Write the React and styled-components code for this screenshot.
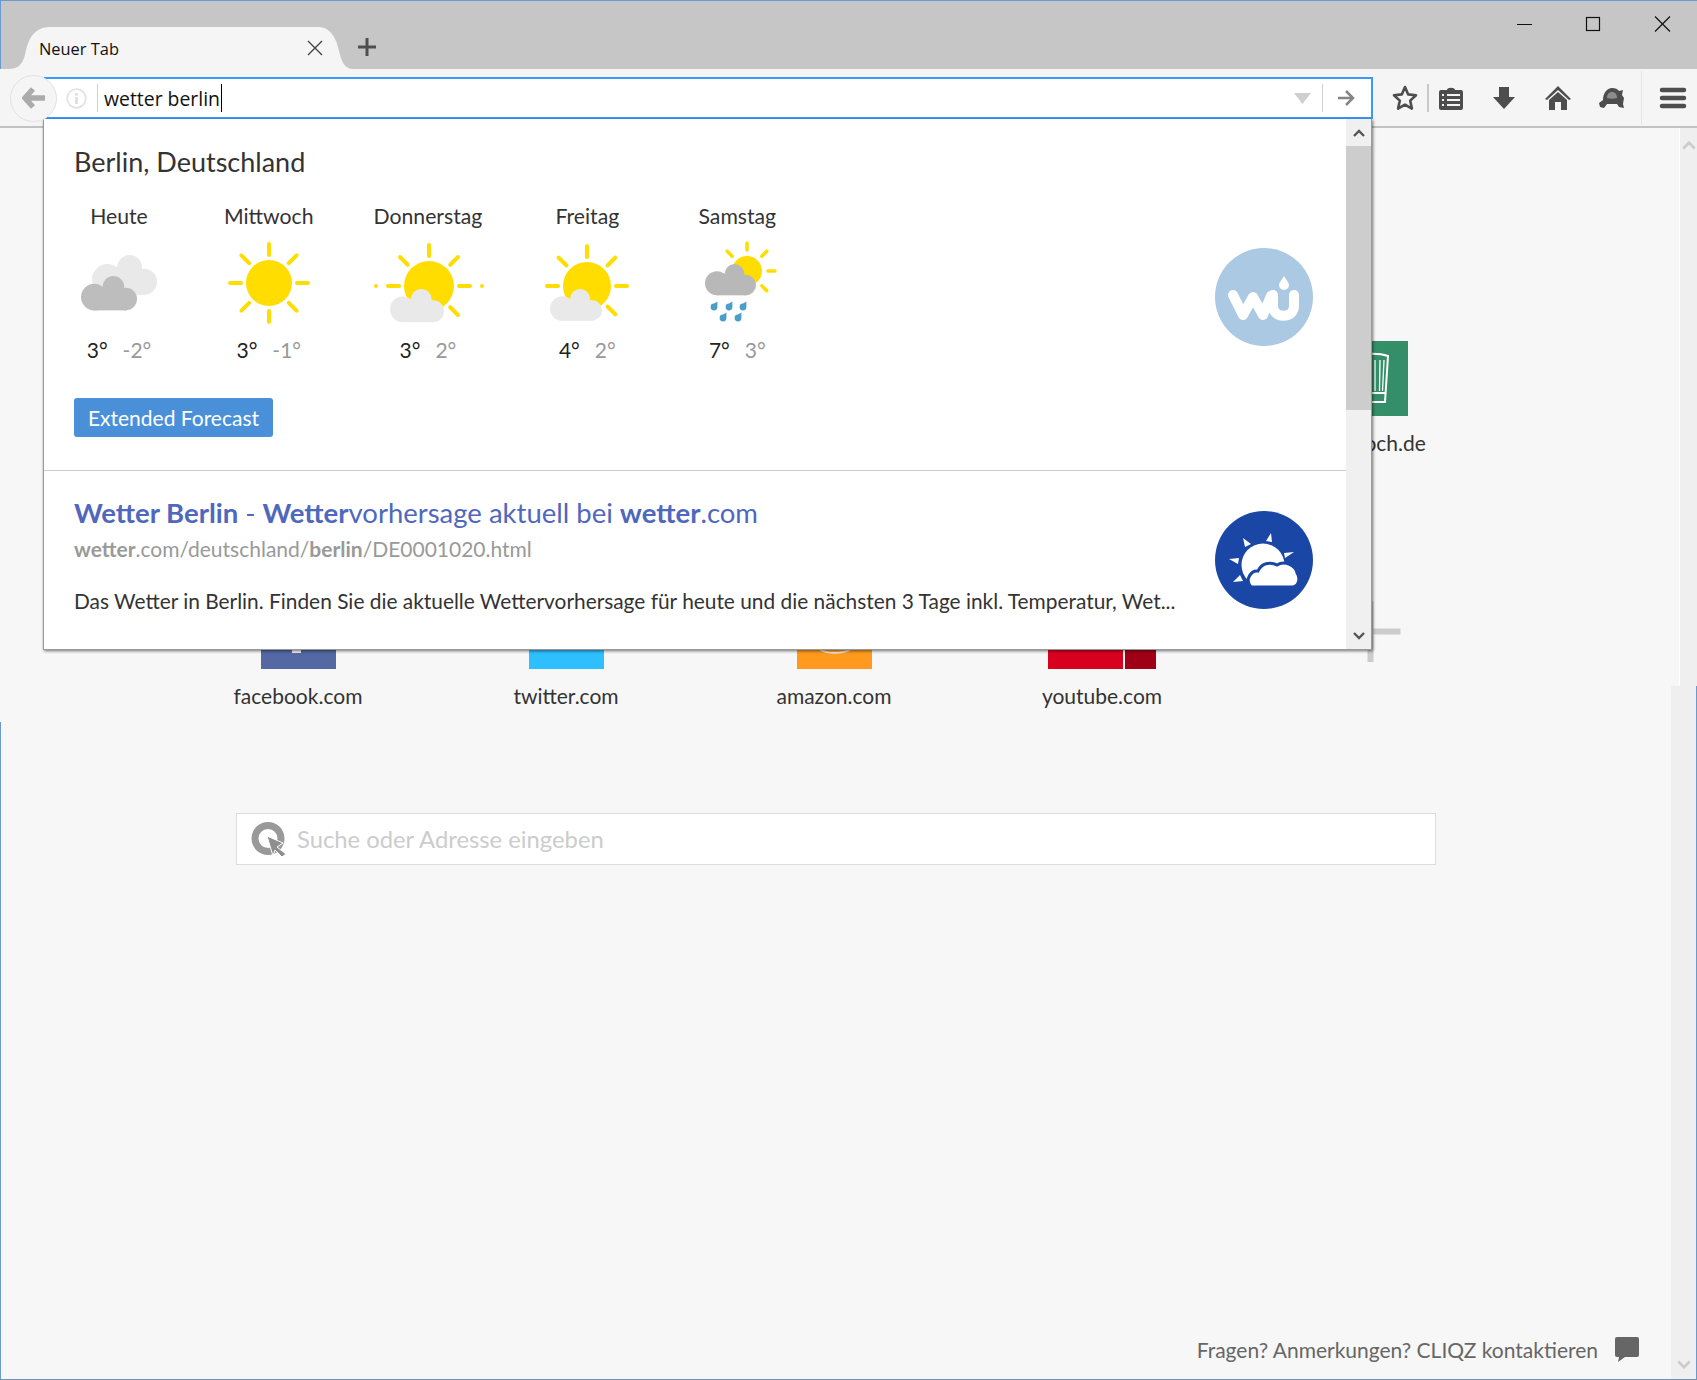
import React from "react";
import styled, { createGlobalStyle } from "styled-components";

const GlobalStyle = createGlobalStyle`
  html, body { margin: 0; padding: 0; background: #f7f7f7; }
  body { font-family: "Lato", "Liberation Sans", sans-serif; color: #333; }
  * { box-sizing: border-box; }
`;

const Window = styled.div`
  width: 1697px;
  height: 1380px;
  display: flex;
  flex-direction: column;
  overflow: hidden;
  border-bottom: 1px solid #6a93b8;
`;

const TabBar = styled.div`
  height: 69px;
  flex: none;
  display: flex;
  align-items: flex-end;
  padding-left: 7px;
  background: #c6c6c6;
  border-top: 1px solid #6a9bd0;
  border-left: 1px solid #6a9bd0;
`;

const Tab = styled.div`
  width: 345px;
  height: 42px;
  display: flex;
  align-items: center;
  padding: 0 0 0 31px;
  background: #f5f5f5;
  font-family: "Open Sans", sans-serif;
  font-size: 16.4px;
  color: #111;
  clip-path: path("M0 42 C10 42 14 38 17 28 C20 12 26 0 42 0 L310 0 C322 0 328 10 331 24 C334 37 338 42 345 42 Z");
`;

const TabTitle = styled.span`
  flex: 1;
`;

const TabClose = styled.svg`
  width: 18px;
  height: 18px;
  margin-right: 29px;
`;

const NewTab = styled.svg`
  width: 20px;
  height: 20px;
  margin: 0 0 12px 4px;
`;

const WindowControls = styled.div`
  margin-left: auto;
  align-self: flex-start;
  display: flex;
  padding-top: 14px;
  gap: 52px;
  padding-right: 26px;
`;

const WinIcon = styled.svg`
  width: 17px;
  height: 17px;
`;

const Toolbar = styled.div`
  height: 59px;
  flex: none;
  position: relative;
  display: flex;
  align-items: center;
  padding: 1px 0 0 10px;
  background: #f5f5f5;
  border-bottom: 2px solid #c2c2c2;
  z-index: 2;
`;

const BackButton = styled.div`
  width: 47px;
  height: 47px;
  flex: none;
  display: flex;
  align-items: center;
  justify-content: center;
  border: 1px solid #e2e2e2;
  border-radius: 50%;
  background: #f5f5f5;
  position: relative;
  z-index: 1;
`;

const UrlBar = styled.div`
  width: 1329px;
  height: 42px;
  margin-left: -13px;
  display: flex;
  align-items: center;
  padding-left: 22px;
  background: #fff;
  border: 2px solid #3b99fc;
  border-left: none;
`;

const UrlSep = styled.span`
  width: 1px;
  height: 28px;
  background: #d0d0d0;
  flex: none;
  margin-left: ${(p) => p.$gap}px;
`;

const UrlText = styled.span`
  margin-left: 6px;
  font-family: "Open Sans", sans-serif;
  font-size: 19.4px;
  color: #111;
  flex: 1;
  display: flex;
  align-items: center;
`;

const Caret = styled.span`
  display: inline-block;
  width: 1px;
  height: 28px;
  background: #000;
  margin-left: 1px;
`;

const GoArrow = styled.svg`
  width: 20px;
  height: 20px;
  margin: 0 15px 0 13px;
`;

const ToolButtons = styled.div`
  display: flex;
  align-items: center;
  flex: 1;
  height: 100%;
  padding-left: 18px;
`;

const ToolIcon = styled.svg`
  width: 28px;
  height: 28px;
  flex: none;
  margin-left: ${(p) => p.$gap || 0}px;
`;

const ToolSep = styled.span`
  width: ${(p) => (p.$thin ? 1 : 2)}px;
  height: ${(p) => (p.$thin ? 54 : 28)}px;
  background: ${(p) => (p.$thin ? "#e4e4e4" : "#c8c8c8")};
  margin-left: ${(p) => p.$gap}px;
  flex: none;
`;

const Popup = styled.div`
  position: absolute;
  left: 43px;
  top: 50px;
  width: 1329px;
  height: 531px;
  display: flex;
  background: #fff;
  border: 1px solid #999;
  border-top: none;
  box-shadow: 1px 1px 3px rgba(0, 0, 0, 0.55);
`;

const PopupBody = styled.div`
  flex: 1;
  min-width: 0;
`;

const WeatherSection = styled.section`
  height: 352px;
  display: flex;
  justify-content: space-between;
  padding: 0 33px 0 30px;
  border-bottom: 1px solid #ccc;
`;

const CityTitle = styled.h2`
  margin: 27px 0 0;
  font-size: 27px;
  line-height: 32px;
  font-weight: 400;
  color: #333;
`;

const Days = styled.div`
  display: flex;
  margin-top: 25px;
  padding-left: 5px;
`;

const Day = styled.div`
  min-width: 80px;
  display: flex;
  flex-direction: column;
  align-items: center;
  margin-left: ${(p) => p.$offset}px;
`;

const DayName = styled.div`
  font-size: 21.2px;
  line-height: 26px;
  color: #333;
  white-space: nowrap;
`;

const WeatherIcon = styled.svg`
  width: 80px;
  height: 80px;
  margin-top: 14px;
  overflow: visible;
`;

const Temps = styled.div`
  display: flex;
  gap: 15px;
  margin-top: 14px;
  font-size: 21px;
  line-height: 26px;
`;

const TempHigh = styled.span`
  color: #222;
`;

const TempLow = styled.span`
  color: #999;
`;

const ForecastButton = styled.button`
  display: block;
  width: 199px;
  height: 39px;
  margin-top: 35px;
  padding: 0;
  border: none;
  border-radius: 3px;
  background: #4a90d9;
  color: #fff;
  font-family: inherit;
  font-size: 21px;
`;

const Logo = styled.svg`
  width: 98px;
  height: 98px;
  flex: none;
  margin-top: ${(p) => p.$top}px;
`;

const ResultSection = styled.section`
  height: 178px;
  display: flex;
  justify-content: space-between;
  padding: 0 33px 0 30px;
`;

const ResultText = styled.div`
  min-width: 0;
`;

const ResultTitle = styled.a`
  display: block;
  margin-top: 24px;
  font-size: 27.5px;
  line-height: 36px;
  color: #4f68bd;
  b { font-weight: 700; }
`;

const ResultUrl = styled.div`
  margin-top: 4px;
  font-size: 21px;
  line-height: 28px;
  color: #999;
`;

const ResultDesc = styled.div`
  margin-top: 24px;
  font-size: 20.88px;
  line-height: 28px;
  color: #333;
  white-space: nowrap;
`;

const PopupScroll = styled.div`
  width: 25px;
  flex: none;
  display: flex;
  flex-direction: column;
  background: #f0f0f0;
`;

const ScrollArrow = styled.div`
  height: ${(p) => p.$h}px;
  flex: none;
  display: flex;
  align-items: center;
  justify-content: center;
`;

const ScrollThumb = styled.div`
  height: 264px;
  background: #cdcdcd;
  flex: none;
`;

const ScrollTrack = styled.div`
  flex: 1;
`;

const Content = styled.div`
  flex: 1;
  min-height: 0;
  display: flex;
`;

const Page = styled.main`
  flex: 1;
  min-width: 0;
  display: flex;
  flex-direction: column;
  background: #f7f7f7;
  border-left: 1px solid;
  border-image: linear-gradient(#f7f7f7 594px, #6a9bd0 594px) 1;
`;

const TileGrid = styled.div`
  display: grid;
  grid-template-columns: repeat(5, 268px);
  grid-template-rows: 253px auto;
  margin: 213px 0 0 163px;
`;

const TileCell = styled.div`
  grid-column: ${(p) => p.$col};
  grid-row: ${(p) => p.$row};
  display: flex;
  flex-direction: column;
  align-items: center;
`;

const TileArt = styled.div`
  width: ${(p) => p.$w || 75}px;
  height: 75px;
  display: flex;
  gap: 2px;
`;

const TileFace = styled.div`
  flex: ${(p) => p.$grow || 1};
  min-width: 0;
  display: flex;
  align-items: flex-end;
  justify-content: center;
  background: ${(p) => p.$bg};
`;

const TileMark = styled.svg`
  width: 75px;
  height: 75px;
  flex: none;
`;

const TileLabel = styled.div`
  margin-top: 14px;
  font-size: 21px;
  line-height: 26px;
  color: #333;
  white-space: nowrap;
`;

const SearchBox = styled.div`
  width: 1200px;
  height: 52px;
  flex: none;
  margin: 104px 0 0 235px;
  display: flex;
  align-items: center;
  gap: 10px;
  padding-left: 13px;
  background: #fff;
  border: 1px solid #ddd;
  font-size: 23.8px;
  color: #ccc;
`;

const SearchIcon = styled.svg`
  width: 37px;
  height: 37px;
  flex: none;
`;

const Footer = styled.footer`
  margin-top: auto;
  height: 50px;
  display: flex;
  align-items: flex-start;
  justify-content: flex-end;
  gap: 16px;
  padding: 7px 31px 0 0;
  font-size: 21px;
  line-height: 28px;
  color: #666;
`;

const Bubble = styled.svg`
  width: 26px;
  height: 26px;
  flex: none;
`;

const PageScroll = styled.aside`
  width: 26px;
  flex: none;
  display: flex;
  flex-direction: column;
  align-items: flex-end;
  background: #f7f7f7;
`;

const PageScrollTop = styled.div`
  width: 18px;
  height: 558px;
  flex: none;
  display: flex;
  justify-content: center;
  padding-top: 9px;
  background: #efefef;
  border-left: 1px solid #fff;
`;

const PageScrollBottom = styled.div`
  width: 26px;
  flex: 1;
  display: flex;
  align-items: flex-end;
  justify-content: center;
  padding-bottom: 6px;
  background: #efefef;
  border-right: 1px solid #6a9bd0;
`;

const Chevron = ({ up, color = "#555", size = 14 }) => (
  <svg width={size} height={size} viewBox="0 0 14 14">
    <path d={up ? "M2 10 L7 5 L12 10" : "M2 4 L7 9 L12 4"} fill="none" stroke={color} strokeWidth="2.4" />
  </svg>
);

const GREY = "#4d4d4d";
const SUN = "#ffdd00";
const LIGHT = "#e9e9e9";
const DARK = "#bdbdbd";

// cloud built from circles, base size 57x35
const Cloud = ({ x, y, w, fill }) => (
  <g transform={`translate(${x} ${y}) scale(${w / 57})`} fill={fill}>
    <circle cx="13.5" cy="21.5" r="13.5" />
    <circle cx="33" cy="11" r="11" />
    <circle cx="45.5" cy="23.5" r="11.5" />
    <rect x="13" y="14" width="33" height="21" />
  </g>
);

const Sun = ({ cx, cy, r, inner, outer, width = 4, angles = [0, 45, 90, 135, 180, 225, 270, 315] }) => (
  <g>
    <circle cx={cx} cy={cy} r={r} fill={SUN} />
    {angles.map((a) => {
      const t = (a * Math.PI) / 180;
      return (
        <line
          key={a}
          x1={cx + Math.cos(t) * inner}
          y1={cy + Math.sin(t) * inner}
          x2={cx + Math.cos(t) * outer}
          y2={cy + Math.sin(t) * outer}
          stroke={SUN}
          strokeWidth={width}
          strokeLinecap="round"
        />
      );
    })}
  </g>
);

const Drop = ({ x, y }) => (
  <path transform={`translate(${x} ${y})`} d="M3.4 -4.4 L3.4 1 A3.4 3.4 0 1 1 0 -2.4 Z" fill="#4a9fc8" />
);

// rays that are not hidden behind the cloud
const RAYS_OVER_CLOUD = [0, 45, 180, 225, 270, 315];

const CloudIcon = () => (
  <WeatherIcon viewBox="0 0 80 80">
    <Cloud x={13} y={12} w={65} fill={LIGHT} />
    <Cloud x={2} y={33} w={56} fill={DARK} />
  </WeatherIcon>
);

const SunIcon = () => (
  <WeatherIcon viewBox="0 0 80 80">
    <Sun cx={40} cy={40} r={23} inner={28} outer={39} />
  </WeatherIcon>
);

const HazyIcon = () => (
  <WeatherIcon viewBox="0 0 80 80">
    <Sun cx={41} cy={43} r={25} inner={30} outer={41} angles={RAYS_OVER_CLOUD} />
    <circle cx={-12} cy={43} r={2} fill={SUN} />
    <circle cx={94} cy={43} r={2} fill={SUN} />
    <Cloud x={2} y={46} w={54} fill={LIGHT} />
  </WeatherIcon>
);

const PartlyIcon = () => (
  <WeatherIcon viewBox="0 0 80 80">
    <Sun cx={40} cy={43} r={24} inner={29} outer={40} angles={RAYS_OVER_CLOUD} />
    <Cloud x={3} y={46} w={52} fill={LIGHT} />
  </WeatherIcon>
);

const RainIcon = () => (
  <WeatherIcon viewBox="0 0 80 80">
    <Sun cx={50} cy={28} r={15} inner={21} outer={28} width={3.5} angles={[0, 45, 270, 315, 225]} />
    <Cloud x={8} y={21} w={51} fill="#b8b8b8" />
    <Drop x={17} y={63} />
    <Drop x={32} y={63} />
    <Drop x={46} y={63} />
    <Drop x={26} y={74} />
    <Drop x={41} y={74} />
  </WeatherIcon>
);

const days = [
  { name: "Heute", high: "3°", low: "-2°", Icon: CloudIcon, offset: 0 },
  { name: "Mittwoch", high: "3°", low: "-1°", Icon: SunIcon, offset: 65 },
  { name: "Donnerstag", high: "3°", low: "2°", Icon: HazyIcon, offset: 60 },
  { name: "Freitag", high: "4°", low: "2°", Icon: PartlyIcon, offset: 65 },
  { name: "Samstag", high: "7°", low: "3°", Icon: RainIcon, offset: 70 },
];

const WuLogo = () => (
  <Logo $top={129} viewBox="-49 -49 98 98">
    <circle r="49" fill="#abc9e3" />
    <path
      d="M-31 -2 L-21 18 L-11 0 L-1 18 L7 -1 M9 -2 L9 9 C9 22 30 22 30 9 L30 -2"
      fill="none"
      stroke="#fff"
      strokeWidth="10"
      strokeLinecap="round"
      strokeLinejoin="round"
    />
    <path d="M20 -21 C23 -16 25 -14 25 -12 A5 5 0 0 1 15 -12 C15 -14 17 -16 20 -21 Z" fill="#fff" />
  </Logo>
);

const WetterLogo = () => (
  <Logo $top={40} viewBox="-49 -49 98 98">
    <circle r="49" fill="#1a47a5" />
    <circle cx="-1" cy="5" r="21.5" fill="#fff" />
    <path d="M-21 -22 L-13 -16 L-19 -13 Z M7 -27 L8 -18 L2 -19 Z M30 -8 L21 -2 L20 -7 Z M-35 -1 L-25 -2 L-26 4 Z M-31 22 L-24 15 L-21 21 Z" fill="#fff" />
    <path d="M-13 27 C-20 19 -12 10 -6 11 C-2 2 8 2 13 5 C21 0 32 6 33 13 C37 19 34 27 28 27 Z" fill="#fff" stroke="#1a47a5" strokeWidth="3" />
  </Logo>
);

const tiles = [
  { label: "chefkoch.de", col: 5, row: 1, faces: [{ bg: "#348f69", mark: "hat" }] },
  { label: "facebook.com", col: 1, row: 2, faces: [{ bg: "#5468a4", mark: "f" }] },
  { label: "twitter.com", col: 2, row: 2, faces: [{ bg: "#2dbfff" }] },
  { label: "amazon.com", col: 3, row: 2, faces: [{ bg: "#ff9a1f", mark: "smile" }] },
  { label: "youtube.com", col: 4, row: 2, w: 108, faces: [{ bg: "#d8001f", grow: 75 }, { bg: "#a00015", grow: 31 }] },
  { label: "", col: 5, row: 2, faces: [{ bg: "transparent", mark: "plus" }] },
];

const TileMarkDrawing = ({ mark }) => {
  if (mark === "hat") {
    return (
      <TileMark viewBox="0 0 75 75">
        <path d="M20 16 C30 12 46 12 55 15 L52 61 L23 61 Z M24 52 L52 52" fill="none" stroke="#fff" strokeWidth="2" />
        <path d="M32 20 L33 50 M42 19 L42 50 M47 19 L46.5 50 M51 19 L49.5 50" fill="none" stroke="#fff" strokeWidth="1.3" />
      </TileMark>
    );
  }
  if (mark === "f") {
    return (
      <TileMark viewBox="0 0 75 75">
        <rect x="31" y="0" width="9" height="59" fill="#f4f4f4" />
      </TileMark>
    );
  }
  if (mark === "smile") {
    return (
      <TileMark viewBox="0 0 75 75">
        <path d="M22 55 C30 60 46 60 54 55" fill="none" stroke="#f0e6d8" strokeWidth="2" />
      </TileMark>
    );
  }
  if (mark === "plus") {
    return (
      <TileMark viewBox="0 0 75 75">
        <path d="M7.5 37.5 L67.5 37.5 M37.5 7.5 L37.5 68" fill="none" stroke="#cccccc" strokeWidth="6" />
      </TileMark>
    );
  }
  return null;
};

export default function App() {
  return (
    <Window>
      <GlobalStyle />
      <TabBar>
        <Tab>
          <TabTitle>Neuer Tab</TabTitle>
          <TabClose viewBox="0 0 18 18">
            <path d="M2 2 L16 16 M16 2 L2 16" stroke="#444" strokeWidth="1.4" fill="none" />
          </TabClose>
        </Tab>
        <NewTab viewBox="0 0 20 20">
          <path d="M10 1 L10 19 M1 10 L19 10" stroke="#4f4f4f" strokeWidth="3" fill="none" />
        </NewTab>
        <WindowControls>
          <WinIcon viewBox="0 0 17 17">
            <path d="M1 9.5 L16 9.5" stroke="#111" strokeWidth="1" fill="none" />
          </WinIcon>
          <WinIcon viewBox="0 0 17 17">
            <rect x="1.5" y="2.5" width="13" height="13" stroke="#111" strokeWidth="1.2" fill="none" />
          </WinIcon>
          <WinIcon viewBox="0 0 17 17">
            <path d="M1 1.5 L16 16.5 M16 1.5 L1 16.5" stroke="#111" strokeWidth="1.2" fill="none" />
          </WinIcon>
        </WindowControls>
      </TabBar>

      <Toolbar>
        <BackButton>
          <svg width="24" height="24" viewBox="0 0 24 24">
            <path d="M11 3 L3 12 L11 21 M4 12 L23 12" stroke="#ababab" strokeWidth="5.5" fill="none" />
          </svg>
        </BackButton>
        <UrlBar>
          <svg width="21" height="21" viewBox="0 0 21 21">
            <circle cx="10.5" cy="10.5" r="9.3" fill="none" stroke="#e2e2e2" strokeWidth="1.8" />
            <rect x="9.2" y="9" width="2.6" height="7" fill="#dcdcdc" />
            <rect x="9.2" y="5" width="2.6" height="2.6" fill="#dcdcdc" />
          </svg>
          <UrlSep $gap={10} />
          <UrlText>
            wetter berlin
            <Caret />
          </UrlText>
          <svg width="17" height="11" viewBox="0 0 17 11">
            <path d="M0 0 L17 0 L8.5 11 Z" fill="#cfcfcf" />
          </svg>
          <UrlSep $gap={11} />
          <GoArrow viewBox="0 0 20 20">
            <path d="M10 3 L17 10 L10 17 M16 10 L2 10" stroke="#858585" strokeWidth="2.5" fill="none" />
          </GoArrow>
        </UrlBar>
        <ToolButtons>
          <ToolIcon viewBox="0 0 28 28">
            <path d="M14 3 L17.2 10.4 L25 11.2 L19.2 16.6 L20.9 24.6 L14 20.6 L7.1 24.6 L8.8 16.6 L3 11.2 L10.8 10.4 Z" fill="none" stroke={GREY} strokeWidth="2.6" strokeLinejoin="round" />
          </ToolIcon>
          <ToolSep $gap={8} />
          <ToolIcon viewBox="0 0 28 28" $gap={8}>
            <path d="M4 6 H10 C10 3 18 3 18 6 H24 A2 2 0 0 1 26 8 V24 A2 2 0 0 1 24 26 H4 A2 2 0 0 1 2 24 V8 A2 2 0 0 1 4 6 Z" fill={GREY} />
            <path d="M5 11 H7 M10 11 H23 M5 16 H7 M10 16 H23 M5 21 H7 M10 21 H23" stroke="#f5f5f5" strokeWidth="1.8" />
          </ToolIcon>
          <ToolIcon viewBox="0 0 28 28" $gap={25}>
            <path d="M9 3 H19 V13 H25 L14 25 L3 13 H9 Z" fill={GREY} />
          </ToolIcon>
          <ToolIcon viewBox="0 0 28 28" $gap={26}>
            <path d="M14 2 L27 15 L25 16 L14 6 L3 16 L1 15 Z" fill={GREY} />
            <path d="M14 8 L23 16 V26 H17 V18 H11 V26 H5 V16 Z" fill={GREY} />
          </ToolIcon>
          <ToolIcon viewBox="0 0 28 28" $gap={25}>
            <path d="M3 23 L2 19 L6 16 C6 9 10 4 15 4 C18 4 21 5 22 7 L26 6 L25 11 L27 14 L26 20 L27 24 L22 23 L20 20 L10 20 L7 24 Z" fill={GREY} />
            <path d="M10 14 C10 10 12 8 15 8 C18 8 20 10 20 14 C17 15 13 15 10 14 Z" fill="#8c8c8c" />
          </ToolIcon>
          <ToolSep $thin $gap={16} />
          <ToolIcon viewBox="0 0 28 28" $gap={17}>
            <path d="M3 6 H25 M3 14 H25 M3 22 H25" stroke={GREY} strokeWidth="4.5" strokeLinecap="round" fill="none" />
          </ToolIcon>
        </ToolButtons>

        <Popup>
          <PopupBody>
            <WeatherSection>
              <div>
                <CityTitle>Berlin, Deutschland</CityTitle>
                <Days>
                  {days.map(({ name, high, low, Icon, offset }) => (
                    <Day key={name} $offset={offset}>
                      <DayName>{name}</DayName>
                      <Icon />
                      <Temps>
                        <TempHigh>{high}</TempHigh>
                        <TempLow>{low}</TempLow>
                      </Temps>
                    </Day>
                  ))}
                </Days>
                <ForecastButton>Extended Forecast</ForecastButton>
              </div>
              <WuLogo />
            </WeatherSection>
            <ResultSection>
              <ResultText>
                <ResultTitle>
                  <b>Wetter Berlin</b> - <b>Wetter</b>vorhersage aktuell bei <b>wetter</b>.com
                </ResultTitle>
                <ResultUrl>
                  <b>wetter</b>.com/deutschland/<b>berlin</b>/DE0001020.html
                </ResultUrl>
                <ResultDesc>
                  Das Wetter in Berlin. Finden Sie die aktuelle Wettervorhersage für heute und die nächsten 3 Tage inkl. Temperatur, Wet...
                </ResultDesc>
              </ResultText>
              <WetterLogo />
            </ResultSection>
          </PopupBody>
          <PopupScroll>
            <ScrollArrow $h={27}>
              <Chevron up />
            </ScrollArrow>
            <ScrollThumb />
            <ScrollTrack />
            <ScrollArrow $h={26}>
              <Chevron />
            </ScrollArrow>
          </PopupScroll>
        </Popup>
      </Toolbar>

      <Content>
        <Page>
          <TileGrid>
            {tiles.map((tile) => (
              <TileCell key={`${tile.col}-${tile.row}`} $col={tile.col} $row={tile.row}>
                <TileArt $w={tile.w}>
                  {tile.faces.map((face) => (
                    <TileFace key={face.bg} $bg={face.bg} $grow={face.grow}>
                      {face.mark && <TileMarkDrawing mark={face.mark} />}
                    </TileFace>
                  ))}
                </TileArt>
                {tile.label && <TileLabel>{tile.label}</TileLabel>}
              </TileCell>
            ))}
          </TileGrid>
          <SearchBox>
            <SearchIcon viewBox="0 0 37 37">
              <path d="M18 1 A16.5 16.5 0 1 1 18 34 A16.5 16.5 0 1 1 18 1 Z M18 8 A9.5 9.5 0 1 0 18 27 A9.5 9.5 0 1 0 18 8 Z" fill="#999" fillRule="evenodd" />
              <path d="M17 15 L33 22 L27 26 L36 33 L32 36 L25 29 L23 35 Z" fill="#8f8f8f" stroke="#fff" strokeWidth="1" />
            </SearchIcon>
            Suche oder Adresse eingeben
          </SearchBox>
          <Footer>
            Fragen? Anmerkungen? CLIQZ kontaktieren
            <Bubble viewBox="0 0 26 26">
              <path d="M3 1 H23 A2 2 0 0 1 25 3 V19 A2 2 0 0 1 23 21 H11 L4 26 L5 21 H3 A2 2 0 0 1 1 19 V3 A2 2 0 0 1 3 1 Z" fill="#666" />
            </Bubble>
          </Footer>
        </Page>
        <PageScroll>
          <PageScrollTop>
            <Chevron up color="#cdcdcd" size={16} />
          </PageScrollTop>
          <PageScrollBottom>
            <Chevron color="#cdcdcd" size={16} />
          </PageScrollBottom>
        </PageScroll>
      </Content>
    </Window>
  );
}
